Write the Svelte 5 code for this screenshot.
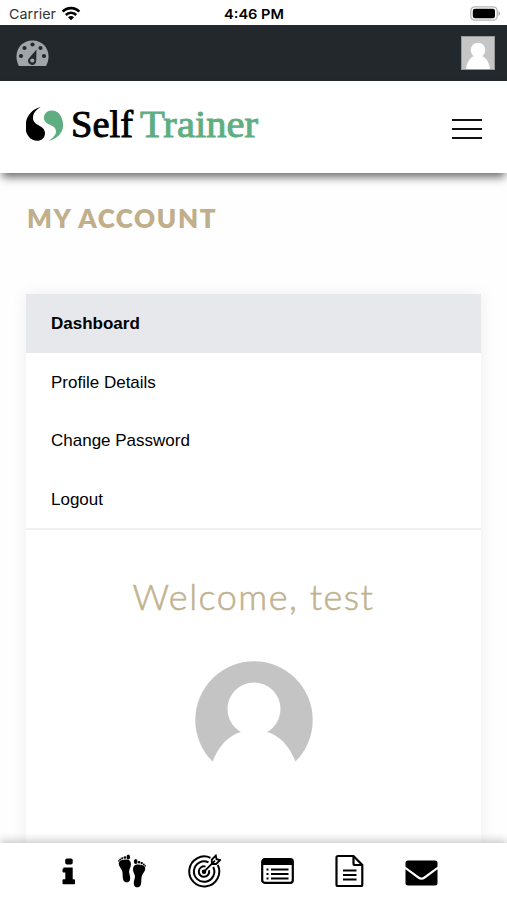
<script lang="ts">
	const menu = ['Dashboard', 'Profile Details', 'Change Password', 'Logout'];
	let active = $state('Dashboard');
	const gauge = [
		[5, 16],
		[8.5, 8],
		[16.5, 4.5],
		[24.5, 8],
		[28, 16]
	];
</script>

<div class="screen">
	<div class="status">
		<div class="carrier">
			<svg class="carrier-name" width="48" height="20" viewBox="0 0 48 20">
				<text x="0" y="14" textLength="47" lengthAdjust="spacingAndGlyphs">Carrier</text>
			</svg>
			<svg width="20" height="15" viewBox="0 0 20 15" fill="none" stroke="#000" stroke-width="2.6">
				<path d="M1.7 5.7C6.2.9 13.8.9 18.3 5.7M4.8 9C7.7 6 12.3 6 15.2 9" />
				<path d="M7 11.2c1.7-1.7 4.3-1.7 6 0l-3 3z" fill="#000" stroke="none" />
			</svg>
		</div>
		<svg width="62" height="20" viewBox="0 0 62 20">
			<text class="time" x="0" y="14" textLength="60" lengthAdjust="spacingAndGlyphs">4:46 PM</text>
		</svg>
		<svg class="battery" width="31" height="15" viewBox="0 0 31 15">
			<rect x=".8" y=".8" width="26.4" height="13.4" rx="4" fill="#fff" stroke="#b5b5b5" stroke-width="1.3" />
			<rect x="2.8" y="2.7" width="22.2" height="9.6" rx="2.3" />
			<path d="M28.5 5v5c2-.7 2-4.3 0-5z" fill="#aaa" />
		</svg>
	</div>

	<div class="adminbar">
		<svg width="33" height="27" viewBox="0 0 33 27">
			<path d="M2.9 26C-3.8 13 4 .5 16.5.5S36.8 13 30.1 26z" fill="#a0a5aa" />
			{#each gauge as [cx, cy]}
				<circle {cx} {cy} r="2.1" fill="#23282d" />
			{/each}
			<path d="M20.5 9.5 13.2 18a4.1 4.1 0 1 0 7 3.2z" fill="#23282d" />
			<circle cx="16.3" cy="20.5" r="2.1" fill="#a0a5aa" />
		</svg>
		<svg class="thumb" width="34" height="34" viewBox="0 0 34 34">
			<path fill="#c5c5c5" d="M0 0h34v34H0z" />
			<circle cx="17" cy="14" r="7.3" fill="#fff" />
			<path d="M5 33c1-8 5-12.5 9-13h6c4 .5 8 5 9 13z" fill="#fff" />
			<path d="M.5.5h33v33H.5z" fill="none" stroke="#969a9c" />
		</svg>
	</div>

	<header>
		<svg class="logo" width="236" height="42" viewBox="0 0 236 42">
			<path d="M14.5 2C-1 6-4 24 3 32c5 6 16 5 16-4 0-8-12-7-12-15 0-5 3-8 7.5-11z" />
			<path
				d="M25.5 5.5c-7 0-10 8-5.5 12 3 3 10 3 10 9 0 4-4 7-7.5 9.500C33 33.5 38 26 37 18 36 10 31.500 5.500 25.500 5.500z"
				fill="#5fae82"
			/>
			<text x="45" y="31.5" textLength="62" lengthAdjust="spacingAndGlyphs" stroke="#000">Self</text>
			<text class="green" x="114" y="31.5" textLength="118" lengthAdjust="spacingAndGlyphs">Trainer</text>
		</svg>
		<button class="burger" aria-label="Menu"><span></span><span></span><span></span></button>
	</header>

	<main>
		<h1>My Account</h1>
		<div class="card">
			<ul>
				{#each menu as item}
					<li class:active={item === active}>
						<button onclick={() => (active = item)}>{item}</button>
					</li>
				{/each}
			</ul>
			<h2>Welcome, test</h2>
			<svg class="avatar" width="118" height="118" viewBox="0 0 118 118">
				<circle cx="59" cy="59" r="58.7" fill="#c4c4c4" />
				<circle cx="59" cy="48" r="26.5" fill="#fff" />
				<path d="M12 118C18 92 30 75 46 71h26c16 4 28 21 34 47z" fill="#fff" />
			</svg>
		</div>
	</main>

	<nav>
		<svg width="14" height="28" viewBox="0 0 14 28">
			<rect x="3.2" y="1.5" width="7.5" height="6" rx="1.8" />
			<path d="M1.5 10.5h9.2v11.7h1.3q1 0 1 1v3q0 1-1 1H1.500q-1 0-1-1v-3q0-1 1-1h1.800v-6.700H1.500q-1 0-1-1v-2q0-1 1-1z" />
		</svg>
		<svg width="30" height="34" viewBox="0 0 30 34">
			<path d="M2.5 7.5C4 5.5 11 4.5 13 7c2 3 .5 6-.7 9-1 3 1.7 6.5.7 10-.8 3-5.5 3.3-6.700 0-1-3-.3-5.500-1-8.500C4.500 14 0 11 2.500 7.500z" />
			<ellipse cx="11.3" cy="3" rx="1.8" ry="2.5" />
			<circle cx="7.9" cy="3.5" r="1.3" />
			<circle cx="5.2" cy="4.3" r="1.1" />
			<circle cx="3.2" cy="5.4" r="1" />
			<circle cx="1.8" cy="6.9" r=".8" />
			<path d="M27.5 12.5C26 10.5 19 9.5 17 12c-2 3-.5 6 .7 9 1 3-1.7 6.5-.7 10 .8 3 5.5 3.300 6.700 0 1-3 .3-5.500 1-8.500.8-3.500 5.300-6.500 2.800-10z" />
			<ellipse cx="18.7" cy="7.5" rx="1.8" ry="2.5" />
			<circle cx="22.1" cy="8.2" r="1.3" />
			<circle cx="24.8" cy="9.2" r="1.1" />
			<circle cx="26.8" cy="10.4" r="1" />
			<circle cx="28.2" cy="11.9" r=".8" />
		</svg>
		<svg width="33" height="34" viewBox="0 0 33 34" fill="none" stroke="#000" stroke-width="2">
			<path d="M22.5 3.8A15 15 0 1 0 29.8 11" />
			<path d="M20.5 8.4A10.2 10.2 0 1 0 25.2 13" />
			<path d="M17.5 12.6A5.2 5.2 0 1 0 21 16.2" />
			<path d="m16 17.600 11-11M23.800 9.800V5.500l4-4 .7 3.700 3.700.8-4 4z" stroke-width="1.8" />
			<circle cx="16" cy="17.7" r="1.3" fill="#000" />
		</svg>
		<svg width="33" height="26" viewBox="0 0 33 26">
			<rect x="1.2" y="1.2" width="30.6" height="23.6" rx="2.5" fill="#fff" stroke="#000" stroke-width="2.2" />
			<path d="M1 7V3q0-2 2-2h27q2 0 2 2v4z" />
			<path d="M5.5 11.5h2m2.500 0h17.500m-22 4.500h2m2.500 0h17.500m-22 4.500h2m2.500 0h17.500" stroke="#000" stroke-width="2" />
		</svg>
		<svg width="29" height="34" viewBox="0 0 29 34" fill="none" stroke="#000" stroke-width="2.2">
			<path d="M3 2h15.500l8.800 9v19.500q0 1.500-1.500 1.500H3q-1.500 0-1.500-1.500v-27Q1.500 2 3 2z" />
			<path d="M18.500 2v7.500q0 1.500 1.500 1.500h7.300M8 16.500h13.500M8 21h13.500M8 25.500h13.500" />
		</svg>
		<svg class="mail" width="33" height="26" viewBox="0 0 33 26">
			<path d="M3 .5h27q2.500 0 2.500 2.500v3.800L19 16.500q-2.500 1.800-5 0L.5 6.800V3Q.5.5 3 .5z" />
			<path d="m.5 9.200 12.300 9.300q3.700 2.500 7.400 0l12.300-9.300V23q0 2.500-2.500 2.500H3Q.5 25.500.5 23z" />
		</svg>
	</nav>
</div>

<style>
	:global(body) {
		margin: 0;
		background: #fff;
	}

	.screen {
		height: 900px;
		overflow: hidden;
		display: flex;
		flex-direction: column;
		background: #fefefe;
		color: #000;
		font-family: 'Liberation Sans', Arial, sans-serif;
	}

	svg {
		display: block;
		flex: none;
	}

	button {
		border: none;
		background: none;
		padding: 0;
		font: inherit;
		color: inherit;
	}

	.status {
		flex: none;
		height: 25px;
		box-sizing: border-box;
		padding: 1px 6px 0 9px;
		display: grid;
		grid-template-columns: 1fr 62px 1fr;
		align-items: center;
		background: #fff;
		font-family: Inter, sans-serif;
		font-size: 13.5px;
	}

	.status text {
		transform: translateY(1.5px);
	}

	.status .time {
		font-weight: 600;
	}

	.carrier {
		display: flex;
		align-items: center;
		gap: 4px;
	}

	.carrier-name {
		fill: #333;
	}

	.battery {
		justify-self: end;
	}

	.adminbar {
		flex: none;
		height: 56px;
		box-sizing: border-box;
		padding: 0 12px 0 16px;
		display: flex;
		justify-content: space-between;
		align-items: center;
		background: #23282d;
	}

	header {
		flex: none;
		height: 92px;
		box-sizing: border-box;
		padding: 0 25px 4px 26px;
		display: flex;
		justify-content: space-between;
		align-items: center;
		background: #fff;
		box-shadow: 0 6px 9px -2px rgba(0, 0, 0, 0.6);
	}

	.logo {
		margin-top: 1px;
	}

	.logo text {
		font-family: 'Liberation Serif', serif;
		font-size: 37px;
		stroke-width: 0.9;
	}

	.logo .green {
		fill: #5fae82;
		stroke: #5fae82;
	}

	.burger {
		width: 30px;
		margin-top: 8px;
		display: flex;
		flex-direction: column;
		gap: 7px;
	}

	.burger span {
		height: 2px;
		background: #111;
	}

	main {
		flex: 1;
		min-height: 0;
		padding: 29px 26px 0;
		display: flex;
		flex-direction: column;
	}

	h1 {
		margin: 0 0 60px 1px;
		font: 800 26px/32px Lato, sans-serif;
		letter-spacing: 1.6px;
		text-transform: uppercase;
		color: #c1ae8b;
	}

	.card {
		flex: 1;
		display: flex;
		flex-direction: column;
		align-items: center;
		background: #fff;
		box-shadow: 0 0 16px rgba(0, 0, 0, 0.07);
	}

	ul {
		width: 100%;
		margin: 0;
		padding: 0;
		list-style: none;
		border-bottom: 2px solid #f0f0f1;
	}

	li {
		height: 58.5px;
		box-sizing: border-box;
		padding: 2px 0 0 25px;
		display: flex;
		align-items: center;
		font-size: 17px;
	}

	li.active {
		background: #e6e8eb;
		font-weight: bold;
	}

	h2 {
		margin: 43px 0 42px;
		font: 300 36px/46px Lato, sans-serif;
		letter-spacing: 1.5px;
		color: #c2b38f;
		-webkit-text-stroke: 0.6px #c2b38f;
	}

	nav {
		position: relative;
		flex: none;
		height: 57px;
		box-sizing: border-box;
		padding: 0 69px 1px 62px;
		display: flex;
		justify-content: space-between;
		align-items: center;
		background: #fff;
		box-shadow: 0 -3px 8px rgba(0, 0, 0, 0.2);
	}

	.mail {
		margin-top: 3px;
	}
</style>
